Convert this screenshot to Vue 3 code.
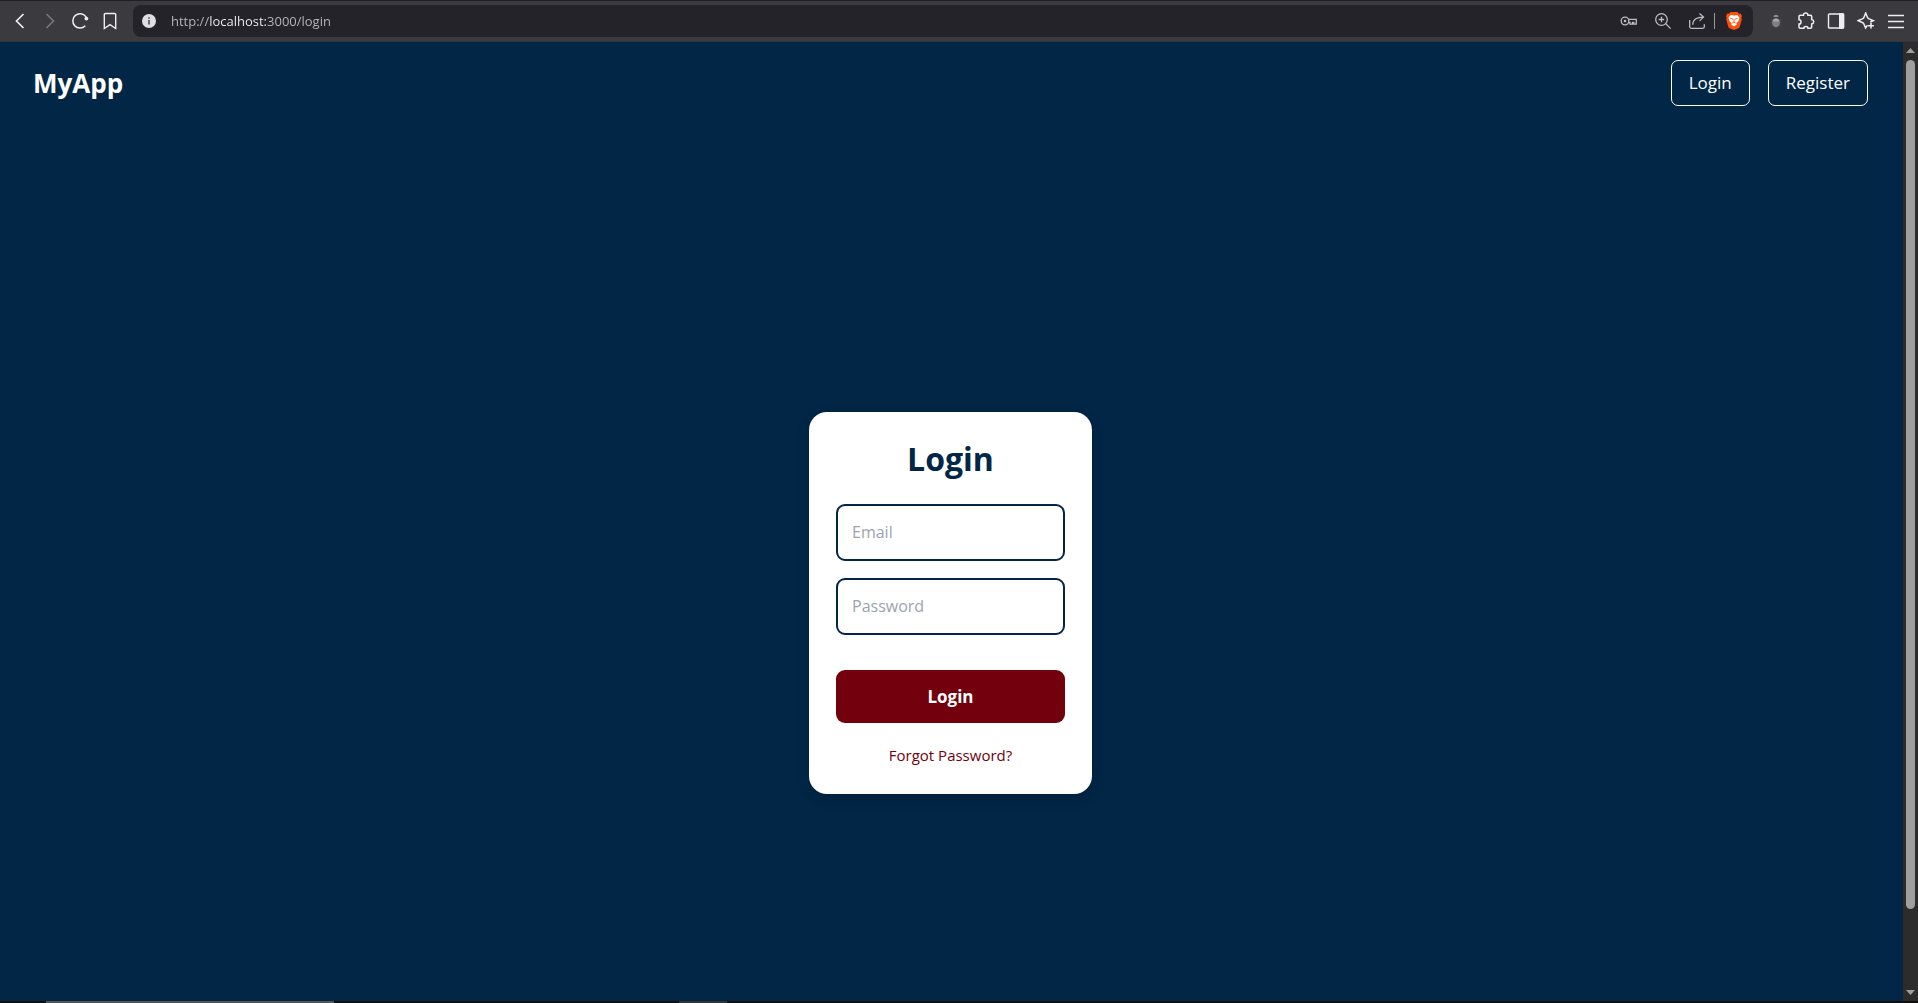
<script setup>
import { ref } from 'vue'

const url = ref('http://localhost:3000/login')
const email = ref('')
const password = ref('')
</script>

<template>
  <div class="browser">
    <header class="toolbar">
      <div class="group">
        <button class="tool" type="button" aria-label="Back">
          <svg width="18" height="18" viewBox="0 0 18 18"><path d="M12.500 2 5.500 9l7 7" stroke-width="1.700" /></svg>
        </button>
        <button class="tool dim" type="button" aria-label="Forward">
          <svg width="18" height="18" viewBox="0 0 18 18"><path d="M5.500 2l7 7-7 7" stroke-width="1.700" /></svg>
        </button>
        <button class="tool" type="button" aria-label="Reload">
          <svg width="18" height="18" viewBox="0 0 18 18">
            <path d="M14.300 13.800A7.200 7.200 0 1 1 14.800 4.600l.6 1" stroke-width="1.500" />
            <circle cx="15.400" cy="6.600" r="1.900" class="solid" />
          </svg>
        </button>
        <button class="tool" type="button" aria-label="Bookmark">
          <svg width="18" height="18" viewBox="0 0 18 18"><path d="M4.300 1.500h9.400q1 0 1 1v14L9 12.600l-5.700 3.900v-14q0-1 1-1z" stroke-width="1.400" /></svg>
        </button>
      </div>

      <div class="address">
        <button class="site-info" type="button" aria-label="Site information">
          <svg width="14" height="14" viewBox="0 0 14 14">
            <circle cx="7" cy="7" r="7" fill="#dedee3" />
            <path d="M7 6v4.500M7 3.300v1.500" stroke="#55545b" stroke-width="1.700" />
          </svg>
        </button>
        <input v-model="url" class="url" type="text" aria-label="Address" spellcheck="false" />
        <button class="inner" type="button" aria-label="Passwords">
          <svg width="18" height="18" viewBox="0 0 18 18">
            <circle cx="5" cy="9" r="3.800" />
            <circle cx="5" cy="9" r="1.300" class="solid" />
            <path d="M8.500 7.400h7.800v4.800h-2.500v-1.800h-1.300v1.800H10v-1.800H8.600" />
          </svg>
        </button>
        <button class="inner" type="button" aria-label="Zoom">
          <svg width="18" height="18" viewBox="0 0 18 18">
            <circle cx="7.500" cy="7.500" r="5.800" />
            <path d="M11.800 11.800l4.800 4.800M4.800 7.500h5.400M7.500 4.800v5.400" />
          </svg>
        </button>
        <button class="inner" type="button" aria-label="Share">
          <svg width="18" height="18" viewBox="0 0 18 18">
            <path d="M1.700 8v6.800q0 1.500 1.500 1.500h11.600q1.500 0 1.500-1.500v-2.500" />
            <path d="M4.800 12.800c0-5 3.500-7.700 10.500-7.700M11.500 1.500l4 3.600-4 3.800" />
          </svg>
        </button>
        <button class="shield" type="button" aria-label="Shields">
          <svg width="16" height="18" viewBox="0 0 16 18">
            <path d="M4.500 0h7l1.600 1.700 1.500-.2L16 4l-.6 1.800.4 1.600-2 7.100q-.3 1-1.300 1.700L8 18l-4.500-1.800q-1-.7-1.300-1.700l-2-7.100.4-1.600L0 4l1.400-2.500 1.500.2z" fill="#fb4f0b" />
            <path d="M4.700 3 8 3.600 11.300 3l2.200 2.700-1.200 3.700-1.900 1.700.4 1.300L8 14.600l-2.800-2.200.4-1.300-1.900-1.700-1.200-3.700z" fill="#fff" />
            <path d="M4.400 6.400l2.200.5.400.9M11.600 6.400l-2.200.5-.4.9M8 7.600v2.600M6.300 11 8 10.200l1.700.8" stroke="#fb4f0b" stroke-width=".9" />
          </svg>
        </button>
      </div>

      <div class="group">
        <button class="tool" type="button" aria-label="Debugger extension">
          <svg width="18" height="18" viewBox="0 0 18 18">
            <path d="M3.500 7.500h2M3.500 10.500h2M3.500 13.500l2-.5M14.500 7.500h-2M14.500 10.500h-2M14.500 13.500l-2-.5" stroke="#504f54" stroke-width="1" />
            <path d="M6.300 5Q6.600 2.800 9 2.800T11.700 5z" fill="#8c8c8e" />
            <ellipse cx="9" cy="10.800" rx="3.900" ry="4.500" fill="#7f7f82" />
            <path d="M5.500 9.500q.7-3 3.500-3t3.500 3z" fill="#a6a6a8" />
          </svg>
        </button>
        <button class="tool" type="button" aria-label="Extensions">
          <svg width="18" height="18" viewBox="0 0 18 18"><path d="M3.200 3.300h3.300C6.400 1.800 7.400.9 8.700.9s2.300.9 2.200 2.400h2.600q1.200 0 1.200 1.200v3.100c1.300.2 2 1.100 2 2.200s-.7 2-2 2.200v3.100q0 1.200-1.200 1.200h-2.600c0-1.100-.8-1.700-2-1.700s-2 .6-2 1.700H3.200q-1.200 0-1.200-1.200V12c1.300 0 2-.9 2-2.100S3.300 7.800 2 7.800V4.500q0-1.200 1.200-1.200z" stroke-width="1.500" /></svg>
        </button>
        <button class="tool" type="button" aria-label="Side panel">
          <svg width="18" height="18" viewBox="0 0 18 18">
            <rect x="1.500" y="2" width="15" height="14" rx="1" stroke-width="1.400" />
            <path d="M12 1.300h4.200q1 0 1 1v13.400q0 1-1 1H12z" class="solid" />
          </svg>
        </button>
        <button class="tool" type="button" aria-label="Assistant">
          <svg width="18" height="18" viewBox="0 0 18 18">
            <path d="M10.500 13.200 8.600 16 7 12.200Q6.500 11 5.300 10.500L1 8.700l4.300-1.800Q6.500 6.400 7 5.200L8.700 1l1.700 4.200q.5 1.200 1.700 1.700l4.200 1.800-3 1.300" stroke-width="1.500" />
            <path d="M14 10.800v5.800M11.100 13.700h5.800" stroke-width="1.600" />
          </svg>
        </button>
        <button class="tool" type="button" aria-label="Menu">
          <svg width="18" height="18" viewBox="0 0 18 18"><path d="M1 3.500h16M1 9.500h16M1 15.500h16" stroke-width="1.400" /></svg>
        </button>
      </div>
    </header>

    <div class="window">
      <div class="page">
        <nav class="navbar">
          <span class="brand">MyApp</span>
          <div class="links">
            <a class="nav-link" href="#login">Login</a>
            <a class="nav-link" href="#register">Register</a>
          </div>
        </nav>
        <main class="content">
          <form class="card" @submit.prevent>
            <h1>Login</h1>
            <input v-model="email" class="field" type="email" placeholder="Email" aria-label="Email" />
            <input v-model="password" class="field" type="password" placeholder="Password" aria-label="Password" />
            <button class="submit" type="submit">Login</button>
            <a class="forgot" href="#forgot">Forgot Password?</a>
          </form>
        </main>
      </div>
      <div class="scrollbar" aria-hidden="true">
        <svg width="9" height="5" viewBox="0 0 9 5"><path d="M4.500 0 9 5H0z" fill="#9f9f9f" /></svg>
        <div class="track"><div class="thumb"></div></div>
        <svg width="9" height="5" viewBox="0 0 9 5"><path d="M0 0h9L4.500 5z" fill="#9f9f9f" /></svg>
      </div>
    </div>

    <footer class="taskbar">
      <span class="task task-active"></span>
      <span class="task task-small"></span>
    </footer>
  </div>
</template>

<style>
body {
  margin: 0;
  overflow: hidden;
}
</style>

<style scoped>
.browser,
.browser * {
  box-sizing: border-box;
}

.browser {
  display: flex;
  flex-direction: column;
  height: 100vh;
  font-family: "Open Sans", "Noto Sans", sans-serif;
  background: #012646;
}

button {
  border: 0;
  padding: 0;
  background: none;
  font-family: inherit;
}

input {
  font-family: inherit;
  outline: none;
}

.toolbar {
  display: flex;
  align-items: center;
  gap: 8px;
  flex: none;
  height: 42px;
  padding: 0 7px 0 5px;
  background: #3b3a3f;
  border-top: 1px solid #211f26;
  border-bottom: 1px solid #37363b;
}

.group {
  display: flex;
}

.tool,
.inner,
.shield,
.site-info {
  display: flex;
  flex: none;
  align-items: center;
  justify-content: center;
  height: 32px;
}

.tool {
  width: 30px;
  color: #eeeef0;
}

.tool.dim {
  color: #77767c;
}

.tool svg,
.inner svg {
  fill: none;
  stroke: currentColor;
}

.tool path[fill],
.tool ellipse {
  stroke: none;
}

.solid {
  fill: currentColor;
  stroke: none;
}

.address {
  display: flex;
  flex: 1;
  align-items: center;
  height: 32px;
  border-radius: 8px;
  background: #242329;
}

.site-info {
  width: 32px;
}

.url {
  flex: 1;
  min-width: 0;
  height: 32px;
  border: 0;
  padding: 0 6px;
  font-size: 13px;
  color: #b9b9be;
  background: linear-gradient(90deg, #b9b9be 45px, #f4f4f6 45px, #f4f4f6 101px, #b9b9be 101px);
  background-clip: text;
  -webkit-background-clip: text;
  -webkit-text-fill-color: transparent;
}

.inner {
  width: 34px;
  color: #bcbcc1;
}

.inner svg {
  stroke-width: 1.3;
}

.shield {
  position: relative;
  width: 39px;
}

.shield svg {
  fill: none;
}

.shield::before {
  content: "";
  position: absolute;
  left: 0;
  top: 8px;
  width: 1px;
  height: 16px;
  background: #98979d;
}

.window {
  display: flex;
  flex: 1;
  min-height: 0;
}

.page {
  display: flex;
  flex: 1;
  flex-direction: column;
  overflow: hidden;
}

.navbar {
  display: flex;
  flex: none;
  align-items: center;
  justify-content: space-between;
  padding: 18px 35px 18px 33px;
  color: #fff;
}

.brand {
  font-size: 26px;
  line-height: 40px;
  font-weight: 700;
}

.links {
  display: flex;
  gap: 18px;
}

.nav-link {
  padding: 8px 17px;
  border: 1px solid #fff;
  border-radius: 7px;
  font-size: 17px;
  line-height: 28px;
  color: #fff;
  text-decoration: none;
}

.content {
  display: flex;
  flex: none;
  align-items: center;
  justify-content: center;
  height: 100%;
  padding: 0 2px 2px 0;
}

.card {
  display: flex;
  flex-direction: column;
  width: 283px;
  padding: 26px 27px 28px;
  border-radius: 18px;
  background: #fff;
  box-shadow: 0 4px 13px rgba(0, 0, 0, 0.15);
}

h1 {
  margin: 0 0 24px;
  font-size: 32px;
  line-height: 42px;
  font-weight: 700;
  text-align: center;
  color: #012646;
}

.field {
  width: 100%;
  height: 57px;
  margin-bottom: 17px;
  padding: 0 14px;
  border: 2px solid #012646;
  border-radius: 9px;
  font-size: 16px;
  color: #012646;
  background: #fff;
}

.field::placeholder {
  color: #9ca3af;
}

.submit {
  height: 53px;
  margin-top: 18px;
  border-radius: 9px;
  font-size: 17px;
  font-weight: 700;
  color: #fff;
  background: #72000d;
}

.forgot {
  align-self: center;
  margin-top: 21px;
  font-size: 15px;
  line-height: 22px;
  color: #72000d;
  text-decoration: none;
}

.scrollbar {
  display: flex;
  flex: none;
  flex-direction: column;
  align-items: center;
  gap: 7px;
  width: 15px;
  padding: 6px 0;
  background: #2c2c2c;
}

.track {
  flex: 1;
  width: 9px;
}

.thumb {
  height: 92%;
  border-radius: 5px;
  background: #9f9f9f;
}

.taskbar {
  display: flex;
  flex: none;
  gap: 345px;
  height: 2px;
  padding-left: 46px;
  background: #120f0e;
}

.task-active {
  width: 288px;
  background: #555;
}

.task-small {
  width: 48px;
  background: #333;
}
</style>
